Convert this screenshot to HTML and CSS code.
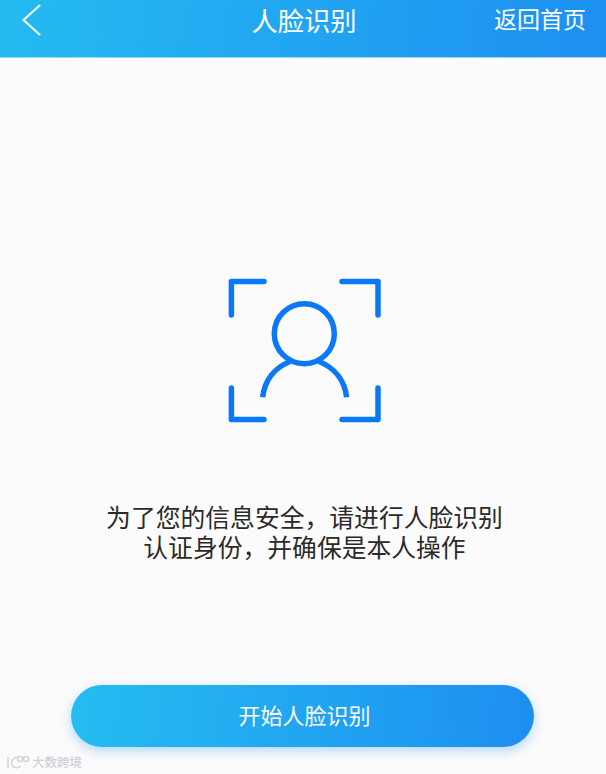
FILE: index.html
```html
<!DOCTYPE html>
<html lang="zh">
<head>
<meta charset="utf-8">
<title>人脸识别</title>
<link rel="stylesheet" href="styles.css">
</head>
<body>
<div class="page">
  <header class="bar">
    <svg class="back" width="20" height="32" viewBox="0 0 20 32"><path d="M18.500 1.500 L2.500 16 L18.500 30.500" fill="none" stroke="#fff" stroke-width="2" stroke-linecap="round" stroke-linejoin="miter"/></svg>
    <h1 class="title">人脸识别</h1>
    <a class="home">返回首页</a>
  </header>
  <main class="content">
    <svg class="face" width="154" height="146" viewBox="0 0 154 146" fill="none" stroke="#0b79f7" stroke-width="5.500">
      <g stroke-linecap="round" stroke-linejoin="round">
        <path d="M36 3.400 H3.400 V37"/>
        <path d="M114 3.400 H150 V37"/>
        <path d="M3.400 110 V141.600 H36"/>
        <path d="M114 141.600 H150 V110"/>
      </g>
      <circle cx="76.300" cy="55.700" r="30"/>
      <path d="M34.700 119.300 C36.500 103 46 90 62 83.500"/>
      <path d="M118.600 119.300 C116.800 103 107 90 91 83.500"/>
    </svg>
    <p class="notice">为了您的信息安全，请进行人脸识别<br>认证身份，并确保是本人操作</p>
    <button class="start">开始人脸识别</button>
  </main>
  <footer class="mark">
    <svg class="mark-logo" width="24" height="15" viewBox="0 0 24 15" fill="none" stroke="#d2d3d8" stroke-width="1.500"><path d="M2 2 V13 M11 2 C6 4 5 7 6 10 C7 13 12 14 15 11"/><circle cx="14" cy="4" r="2.500"/><circle cx="20" cy="4" r="2.500"/></svg>
    <span class="mark-text">大数跨境</span>
  </footer>
</div>
</body>
</html>
```
FILE: styles.css
```css
* { box-sizing: border-box; }
html, body { margin: 0; padding: 0; }
body {
  background: #fbfbfc;
  font-family: "Noto Sans CJK SC", "Liberation Sans", sans-serif;
}
.page {
  position: relative;
  width: 606px;
  height: 774px;
  overflow: hidden;
  display: flex;
  flex-direction: column;
}
.bar {
  position: relative;
  flex: 0 0 58px;
  height: 58px;
  background: linear-gradient(95deg, #25bbf1 0%, #1d8ff1 100%);
  border-bottom: 1px solid #9fd2f7;
  display: flex;
  align-items: flex-start;
  justify-content: space-between;
  padding: 4px 20px 0 21px;
  color: #fff;
}
.title {
  position: absolute;
  left: 2px;
  right: 0;
  top: -2px;
  margin: 0;
  text-align: center;
  font-size: 26.300px;
  line-height: 44px;
  font-weight: 400;
}
.home {
  margin-top: -3px;
  font-size: 23px;
  line-height: 34px;
  font-weight: 400;
}
.content {
  flex: 1;
  display: flex;
  flex-direction: column;
  align-items: center;
  padding-top: 220px;
}
.face { display: block; margin-left: 4px; }
.notice {
  margin: 77px 0 0;
  padding-left: 3px;
  font-size: 24.800px;
  line-height: 30px;
  font-weight: 400;
  text-align: center;
  color: #2a2a2a;
}
.start {
  margin: 124px 1px 0 0;
  padding: 0 0 5px 4px;
  width: 463px;
  height: 62px;
  border: 0;
  border-radius: 31px;
  background: linear-gradient(95deg, #25bdf1 0%, #1d8ef1 100%);
  box-shadow: 0 4px 12px rgba(45, 150, 240, 0.35);
  color: #fff;
  font-family: inherit;
  font-size: 22px;
  font-weight: 400;
}
.mark {
  position: absolute;
  left: 6px;
  bottom: 4px;
  display: flex;
  align-items: center;
  gap: 2px;
}
.mark-text {
  font-size: 12.500px;
  font-weight: 500;
  line-height: 16px;
  color: #cfd0d5;
}
```
